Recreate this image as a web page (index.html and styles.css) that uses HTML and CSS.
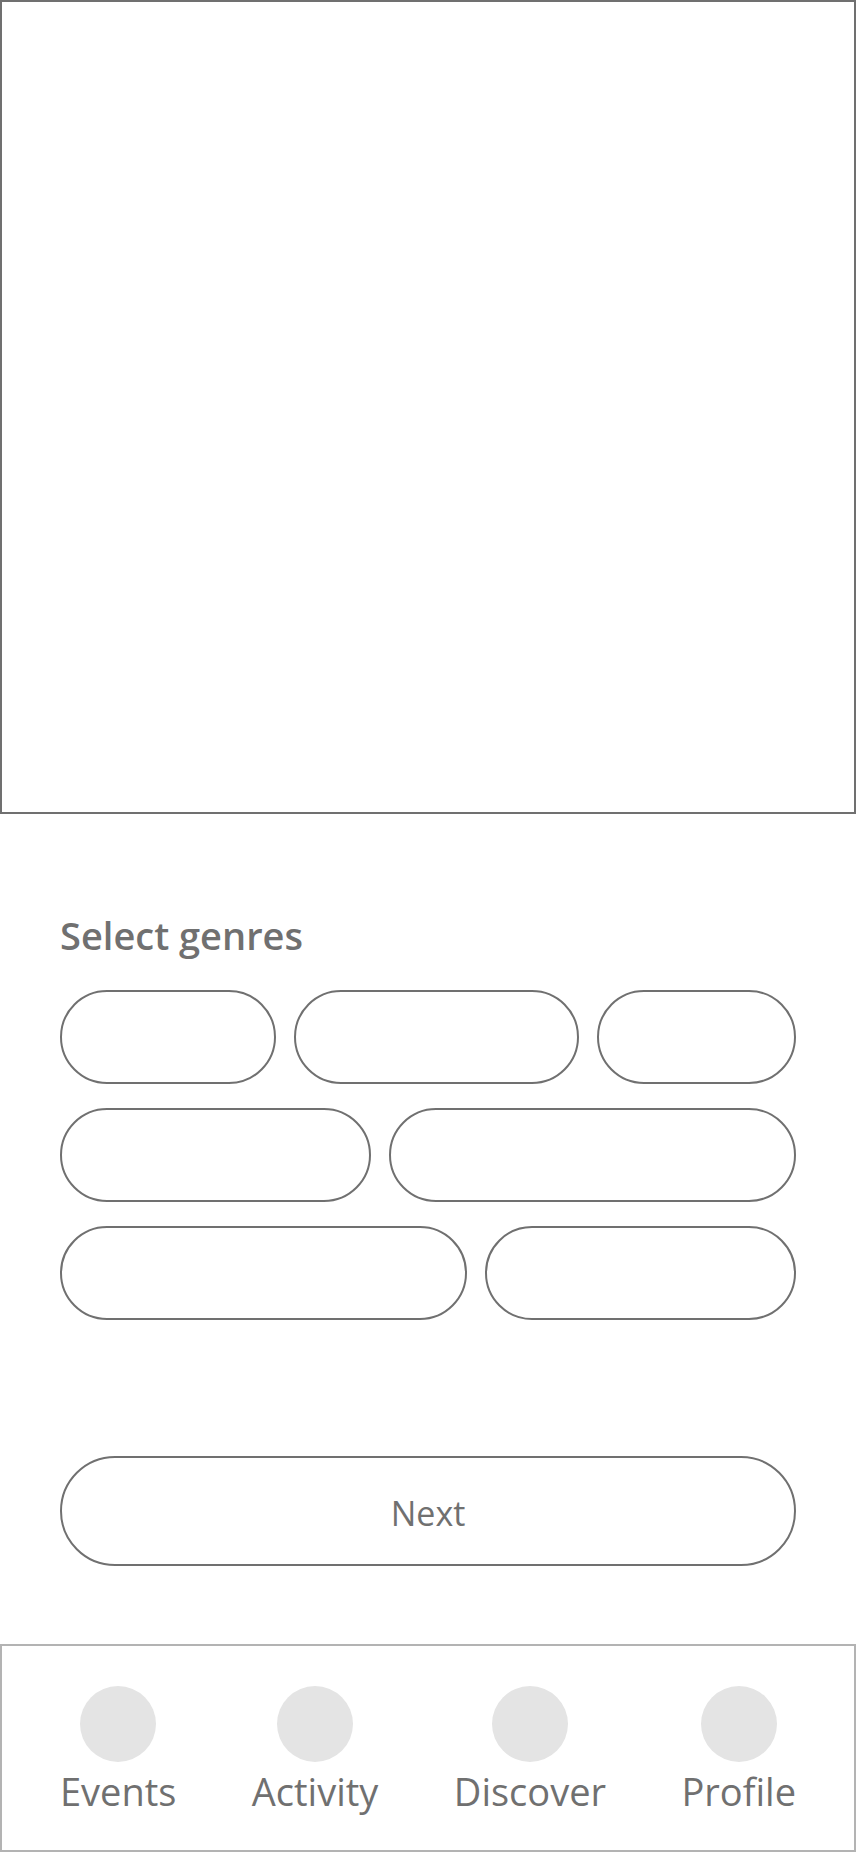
FILE: index.html
```html
<!DOCTYPE html>
<html lang="en">
<head>
<meta charset="utf-8">
<meta name="viewport" content="width=device-width, initial-scale=1">
<title>Select genres</title>
<link rel="stylesheet" href="styles.css">
</head>
<body>
<div class="screen">
  <div class="hero"></div>
  <main class="content">
    <h1 class="title" id="genres-title">Select genres</h1>
    <div class="genres" role="group" aria-labelledby="genres-title">
      <div class="genre-row">
        <button class="chip chip-small" type="button" aria-labelledby="genres-title"></button>
        <button class="chip chip-medium" type="button" aria-labelledby="genres-title"></button>
        <button class="chip chip-tiny" type="button" aria-labelledby="genres-title"></button>
      </div>
      <div class="genre-row">
        <button class="chip chip-large" type="button" aria-labelledby="genres-title"></button>
        <button class="chip chip-wide" type="button" aria-labelledby="genres-title"></button>
      </div>
      <div class="genre-row">
        <button class="chip chip-wide" type="button" aria-labelledby="genres-title"></button>
        <button class="chip chip-large" type="button" aria-labelledby="genres-title"></button>
      </div>
    </div>
    <button class="next" type="button">Next</button>
  </main>
  <nav class="tabs">
    <a class="tab" href="#events"><span class="tab-icon"></span>Events</a>
    <a class="tab" href="#activity"><span class="tab-icon"></span>Activity</a>
    <a class="tab" href="#discover"><span class="tab-icon"></span>Discover</a>
    <a class="tab" href="#profile"><span class="tab-icon"></span>Profile</a>
  </nav>
</div>
</body>
</html>
```

FILE: styles.css
```css
* {
  box-sizing: border-box;
}

body {
  margin: 0;
  background: #fff;
  color: #707070;
  font-family: "Open Sans", "Noto Sans", sans-serif;
}

.screen {
  display: flex;
  flex-direction: column;
  min-height: 100vh;
}

.hero {
  aspect-ratio: 856 / 814;
  border: 2px solid #707070;
}

.content {
  display: flex;
  flex-direction: column;
  padding: 96px 60px 78px;
}

.title {
  margin: 0 0 30px;
  font-size: 38px;
  font-weight: 600;
  line-height: 50px;
}

.genres {
  display: flex;
  flex-direction: column;
  gap: 24px;
}

.genre-row {
  display: flex;
  gap: 18px;
}

.chip,
.next {
  border: 2px solid #707070;
  border-radius: 55px;
  background: transparent;
  color: inherit;
  font-family: inherit;
}

.chip {
  flex: 1 1 0;
  height: 94px;
  padding: 0;
}

.chip-tiny {
  flex-grow: 198;
}

.chip-small {
  flex-grow: 216;
}

.chip-medium {
  flex-grow: 286;
}

.chip-large {
  flex-grow: 311;
}

.chip-wide {
  flex-grow: 408;
}

.next {
  height: 110px;
  margin-top: 136px;
  padding: 4px 0 0;
  font-size: 34px;
}

.tabs {
  display: flex;
  flex: 1;
  justify-content: space-between;
  align-items: flex-start;
  padding: 40px 58px 30px;
  border: 2px solid #b3b3b3;
}

.tab {
  display: flex;
  flex-direction: column;
  align-items: center;
  gap: 4px;
  color: inherit;
  font-size: 38px;
  line-height: 50px;
  text-decoration: none;
}

.tab-icon {
  width: 76px;
  height: 76px;
  border-radius: 50%;
  background: #e4e4e4;
}
```
